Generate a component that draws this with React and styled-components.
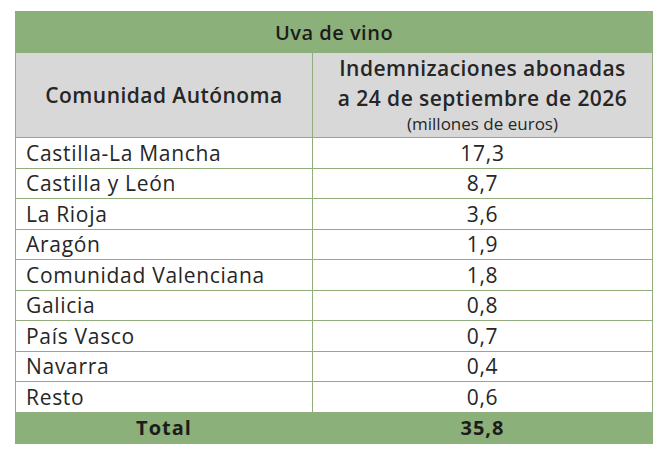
import React from 'react';
import styled, { createGlobalStyle } from 'styled-components';

const GlobalStyle = createGlobalStyle`
  body {
    margin: 0;
    background: #ffffff;
    font-family: "Open Sans", Lato, sans-serif;
    color: #222222;
  }
`;

const rows = [
    ['Castilla-La Mancha', '17,3'],
    ['Castilla y León', '8,7'],
    ['La Rioja', '3,6'],
    ['Aragón', '1,9'],
    ['Comunidad Valenciana', '1,8'],
    ['Galicia', '0,8'],
    ['País Vasco', '0,7'],
    ['Navarra', '0,4'],
    ['Resto', '0,6'],
];

export default function App() {
    return (
        <Page>
            <GlobalStyle />
            <Table>
                <colgroup>
                    <col style={{ width: 297 }} />
                    <col style={{ width: 340 }} />
                </colgroup>
                <thead>
                    <tr>
                        <TitleCell colSpan={2}>Uva de vino</TitleCell>
                    </tr>
                    <tr>
                        <HeadCell>Comunidad Autónoma</HeadCell>
                        <HeadCell $stack>
                            Indemnizaciones abonadas
                            <br />
                            a 24 de septiembre de 2026
                            <Unit>(millones de euros)</Unit>
                        </HeadCell>
                    </tr>
                </thead>
                <tbody>
                    {rows.map(([name, value]) => (
                        <tr key={name}>
                            <Cell>{name}</Cell>
                            <Cell $center>{value}</Cell>
                        </tr>
                    ))}
                </tbody>
                <tfoot>
                    <tr>
                        <TotalCell>Total</TotalCell>
                        <TotalCell>35,8</TotalCell>
                    </tr>
                </tfoot>
            </Table>
        </Page>
    );
}

const Page = styled.div`
    padding: 11px 15px;
`;

const Table = styled.table`
    width: 637px;
    border-collapse: collapse;
    table-layout: fixed;
`;

const TitleCell = styled.th`
    height: 40px;
    padding: 0;
    background: #8cb07a;
    border: 1px solid #8cb07a;
    font-size: 20px;
    font-weight: 600;
    letter-spacing: 0.5px;
    color: #1c1c1c;
    text-align: center;
`;

const HeadCell = styled.th`
    height: 84px;
    padding: 0;
    background: #d8d8d8;
    border: 1px solid #8fae7c;
    font-size: 21px;
    font-weight: 600;
    letter-spacing: 0.45px;
    line-height: 30px;
    color: #262626;
    text-align: center;
    vertical-align: ${(p) => (p.$stack ? 'top' : 'middle')};
`;

const Unit = styled.div`
    font-size: 17px;
    font-weight: 400;
    letter-spacing: 0;
    line-height: 22px;
`;

const Cell = styled.td`
    height: 29.5px;
    padding: 0 0 0 10px;
    border: 1px solid #8fae7c;
    font-size: 21px;
    letter-spacing: 0.7px;
    line-height: 28px;
    color: #262626;
    text-align: ${(p) => (p.$center ? 'center' : 'left')};
    ${(p) => p.$center && 'padding-left: 0;'}
`;

const TotalCell = styled.td`
    height: 30px;
    padding: 0;
    background: #8cb07a;
    border: 1px solid #8cb07a;
    font-size: 20px;
    font-weight: 700;
    letter-spacing: 1px;
    line-height: 28px;
    color: #1c1c1c;
    text-align: center;
`;
